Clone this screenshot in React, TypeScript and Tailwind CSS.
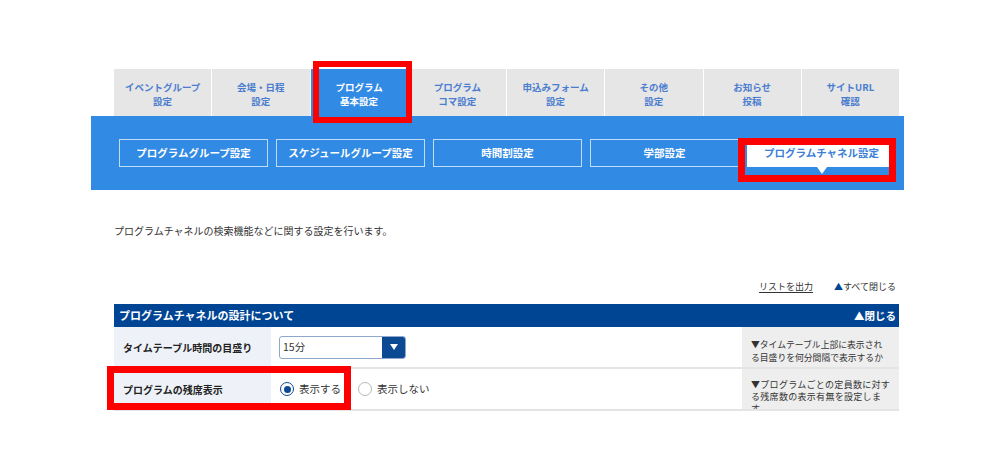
import React from 'react';

const tabs = [
  { id: 1, top: 'イベントグループ', bottom: '設定' },
  { id: 2, top: '会場・日程', bottom: '設定' },
  { id: 3, top: 'プログラム', bottom: '基本設定', active: true },
  { id: 4, top: 'プログラム', bottom: 'コマ設定' },
  { id: 5, top: '申込みフォーム', bottom: '設定' },
  { id: 6, top: 'その他', bottom: '設定' },
  { id: 7, top: 'お知らせ', bottom: '投稿' },
  { id: 8, top: 'サイトURL', bottom: '確認' },
];

const subTabs = [
  { id: 1, label: 'プログラムグループ設定' },
  { id: 2, label: 'スケジュールグループ設定' },
  { id: 3, label: '時間割設定' },
  { id: 4, label: '学部設定' },
  { id: 5, label: 'プログラムチャネル設定', active: true },
];

export default function App() {
  return (
    <div className="relative h-[475px] w-[999px] overflow-hidden bg-white font-['Noto_Sans_CJK_JP','Noto_Sans',sans-serif] text-[#333]">
      <div className="ml-[91px] w-[813px] pt-[69px]">
        {/* main tabs */}
        <div className="ml-[23px] flex w-[785px] gap-px">
          {tabs.map((t) => (
            <div
              key={t.id}
              className={`flex h-[47px] flex-1 flex-col items-center justify-center pt-[3px] text-[9.5px] font-bold leading-[14px] ${
                t.active ? 'bg-[#318ae3] text-white' : 'bg-[#e6e6e6] text-[#4b7dcf]'
              }`}
            >
              <span>{t.top}</span>
              <span>{t.bottom}</span>
            </div>
          ))}
        </div>

        {/* sub tabs */}
        <div className="flex h-[74px] items-center gap-2 bg-[#318ae3] pl-[28px]">
          {subTabs.map((s) => (
            <div
              key={s.id}
              className={`relative flex h-[28px] w-[149px] items-center justify-center text-[10.5px] font-bold ${
                s.active ? 'bg-white text-[#3b7fd6]' : 'border border-white/70 text-white'
              }`}
            >
              {s.label}
              {s.active && (
                <span className="absolute left-1/2 top-full -translate-x-1/2 border-x-[5px] border-t-[7px] border-x-transparent border-t-white" />
              )}
            </div>
          ))}
        </div>
      </div>

      <div className="ml-[114px] w-[785px]">
        <p className="mt-[33px] text-[10px] leading-[15px] text-[#333]">
          プログラムチャネルの検索機能などに関する設定を行います。
        </p>

        <div className="mt-[42px] flex justify-end gap-[21px] pr-[3px] text-[9px] leading-[13px] text-[#333]">
          <span className="underline underline-offset-2">リストを出力</span>
          <span>
            <span className="text-[#004494]">▲</span>すべて閉じる
          </span>
        </div>

        <div className="mt-[11px] flex h-[23px] items-center justify-between bg-[#004494] pl-[5px] pr-[3px] text-[11px] font-bold text-white">
          <span>プログラムチャネルの設計について</span>
          <span className="text-[10.5px]">▲閉じる</span>
        </div>

        {/* row 1 */}
        <div className="flex h-[42px] border-b-2 border-[#e4e4e4]">
          <div className="flex w-[157px] items-center bg-[#eef2f8] pl-[9px] text-[10px] font-bold text-[#222]">
            タイムテーブル時間の目盛り
          </div>
          <div className="flex flex-1 items-center pl-[8px]">
            <div className="flex h-[23px] w-[127px] overflow-hidden rounded-[3px] border border-[#8ea8cb] bg-white">
              <span className="flex flex-1 items-center pl-[3px] text-[10.5px] text-[#333]">15分</span>
              <span className="flex w-[23px] items-center justify-center bg-[#0d4a94]">
                <span className="border-x-[4px] border-t-[6px] border-x-transparent border-t-white" />
              </span>
            </div>
          </div>
          <div className="w-[157px] overflow-hidden whitespace-nowrap bg-[#eeeeee] pl-[9px] pt-[11px] text-[8.8px] leading-[13px] text-[#333]">
            ▼タイムテーブル上部に表示され
            <br />
            る目盛りを何分間隔で表示するか
          </div>
        </div>

        {/* row 2 */}
        <div className="flex h-[42px] border-b-2 border-[#e4e4e4]">
          <div className="flex w-[157px] items-center bg-[#eef2f8] pl-[9px] text-[10px] font-bold text-[#222]">
            プログラムの残席表示
          </div>
          <div className="flex flex-1 items-center pl-[9px] text-[10.5px] text-[#333]">
            <span className="flex h-[14px] w-[14px] items-center justify-center rounded-full border-[1.5px] border-[#0d4a94] bg-white">
              <span className="h-[7px] w-[7px] rounded-full bg-[#0d4a94]" />
            </span>
            <span className="ml-[5px]">表示する</span>
            <span className="ml-[17px] h-[14px] w-[14px] rounded-full border border-[#b8b8b8] bg-white" />
            <span className="ml-[5px]">表示しない</span>
          </div>
          <div className="w-[157px] overflow-hidden whitespace-nowrap bg-[#eeeeee] pl-[9px] pt-[10px] text-[9px] leading-[12px] tracking-[0.3px] text-[#333]">
            ▼プログラムごとの定員数に対す
            <br />
            る残席数の表示有無を設定しま
            <br />
            す。
          </div>
        </div>
      </div>

      {/* annotation boxes */}
      <div className="pointer-events-none absolute left-[313px] top-[61px] h-[62px] w-[99px] border-[6px] border-[#ff0000]" />
      <div className="pointer-events-none absolute left-[738px] top-[138px] h-[44px] w-[158px] border-[7px] border-[#ff0000]" />
      <div className="pointer-events-none absolute left-[107px] top-[366px] h-[44px] w-[244px] border-[7px] border-[#ff0000]" />
    </div>
  );
}
